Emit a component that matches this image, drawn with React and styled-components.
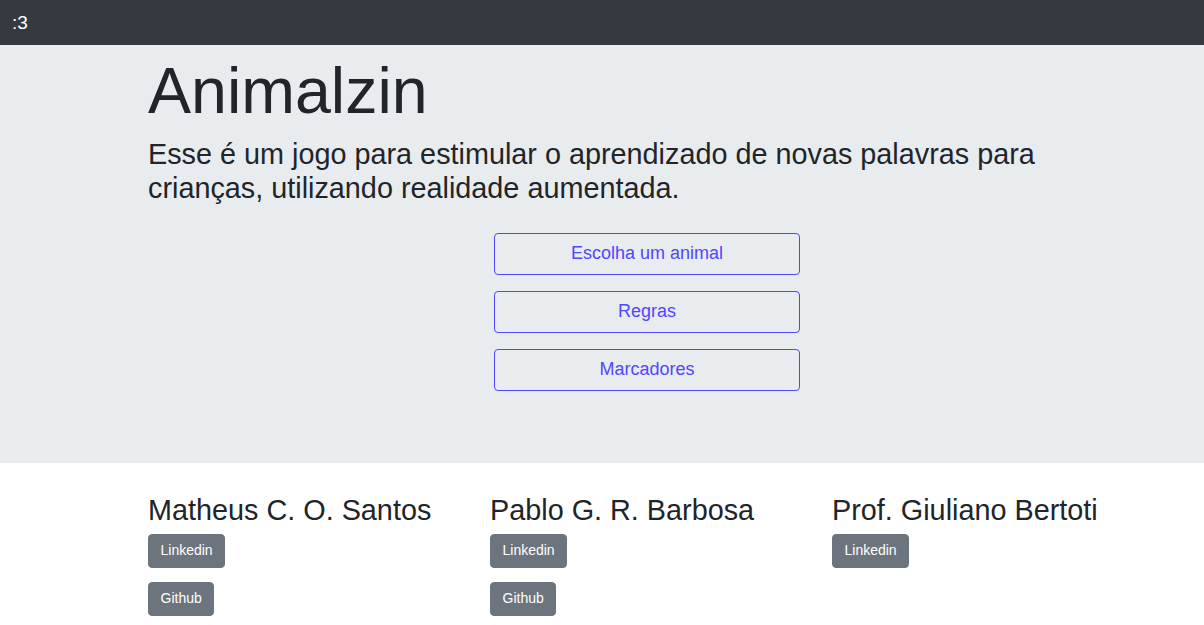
import React from "react";
import { styled, createGlobalStyle } from "styled-components";

const GlobalStyle = createGlobalStyle`
  body {
    margin: 0;
    font-family: "Liberation Sans", Arial, sans-serif;
    color: #212529;
    background: #fff;
  }
`;

const NavBar = styled.nav`
  display: flex;
  align-items: center;
  height: 45px;
  padding: 0 12px;
  background: #343a40;
`;
const Brand = styled.span`
  color: #fff;
  font-size: 19px;
  line-height: 1;
`;
const Jumbo = styled.section`
  background: #e9ecef;
  padding: 8px 0 72px;
`;
const Container = styled.div`
  margin-left: 148px;
  width: 996px;
`;
const Title = styled.h1`
  margin: 0 0 8px;
  font-size: 64.5px;
  font-weight: 400;
  line-height: 1.2;
`;
const Lead = styled.h3`
  margin: 0;
  font-size: 28.8px;
  font-weight: 400;
  line-height: 1.15;
`;
const Menu = styled.div`
  display: flex;
  flex-direction: column;
  align-items: center;
  gap: 16px;
  margin-top: 28px;
  padding-left: 2px;
`;
const OutlineBtn = styled.button`
  width: 306px;
  height: 42px;
  border: 1px solid #5046ff;
  border-radius: 4px;
  background: transparent;
  color: #5046ff;
  font-family: inherit;
  font-size: 18px;
  cursor: pointer;
`;
const Team = styled(Container)`
  display: grid;
  grid-template-columns: repeat(3, 312px);
  column-gap: 30px;
  padding-top: 29px;
`;
const Member = styled.div`
  display: flex;
  flex-direction: column;
  align-items: flex-start;
`;
const Name = styled.h3`
  margin: 0 0 6px;
  font-size: 28.8px;
  font-weight: 400;
  line-height: 36px;
  white-space: nowrap;
`;
const Links = styled.div`
  display: flex;
  flex-direction: column;
  align-items: flex-start;
  gap: 14px;
`;
const LinkBtn = styled.a`
  display: inline-block;
  padding: 5.5px 11.5px;
  border: 1px solid #6c757d;
  border-radius: 4px;
  background: #6c757d;
  color: #fff;
  font-size: 14px;
  line-height: 21px;
  text-decoration: none;
`;

const members = [
  { name: "Matheus C. O. Santos", links: ["Linkedin", "Github"] },
  { name: "Pablo G. R. Barbosa", links: ["Linkedin", "Github"] },
  { name: "Prof. Giuliano Bertoti", links: ["Linkedin"] },
];

const App = () => {
  return (
    <>
      <GlobalStyle />
      <NavBar>
        <Brand>:3</Brand>
      </NavBar>
      <Jumbo>
        <Container>
          <Title>Animalzin</Title>
          <Lead>
            Esse é um jogo para estimular o aprendizado de novas palavras para
            crianças, utilizando realidade aumentada.
          </Lead>
          <Menu>
            <OutlineBtn>Escolha um animal</OutlineBtn>
            <OutlineBtn>Regras</OutlineBtn>
            <OutlineBtn>Marcadores</OutlineBtn>
          </Menu>
        </Container>
      </Jumbo>
      <Team>
        {members.map((m) => (
          <Member key={m.name}>
            <Name>{m.name}</Name>
            <Links>
              {m.links.map((l) => (
                <LinkBtn key={l} href="#">
                  {l}
                </LinkBtn>
              ))}
            </Links>
          </Member>
        ))}
      </Team>
    </>
  );
};

export default App;
